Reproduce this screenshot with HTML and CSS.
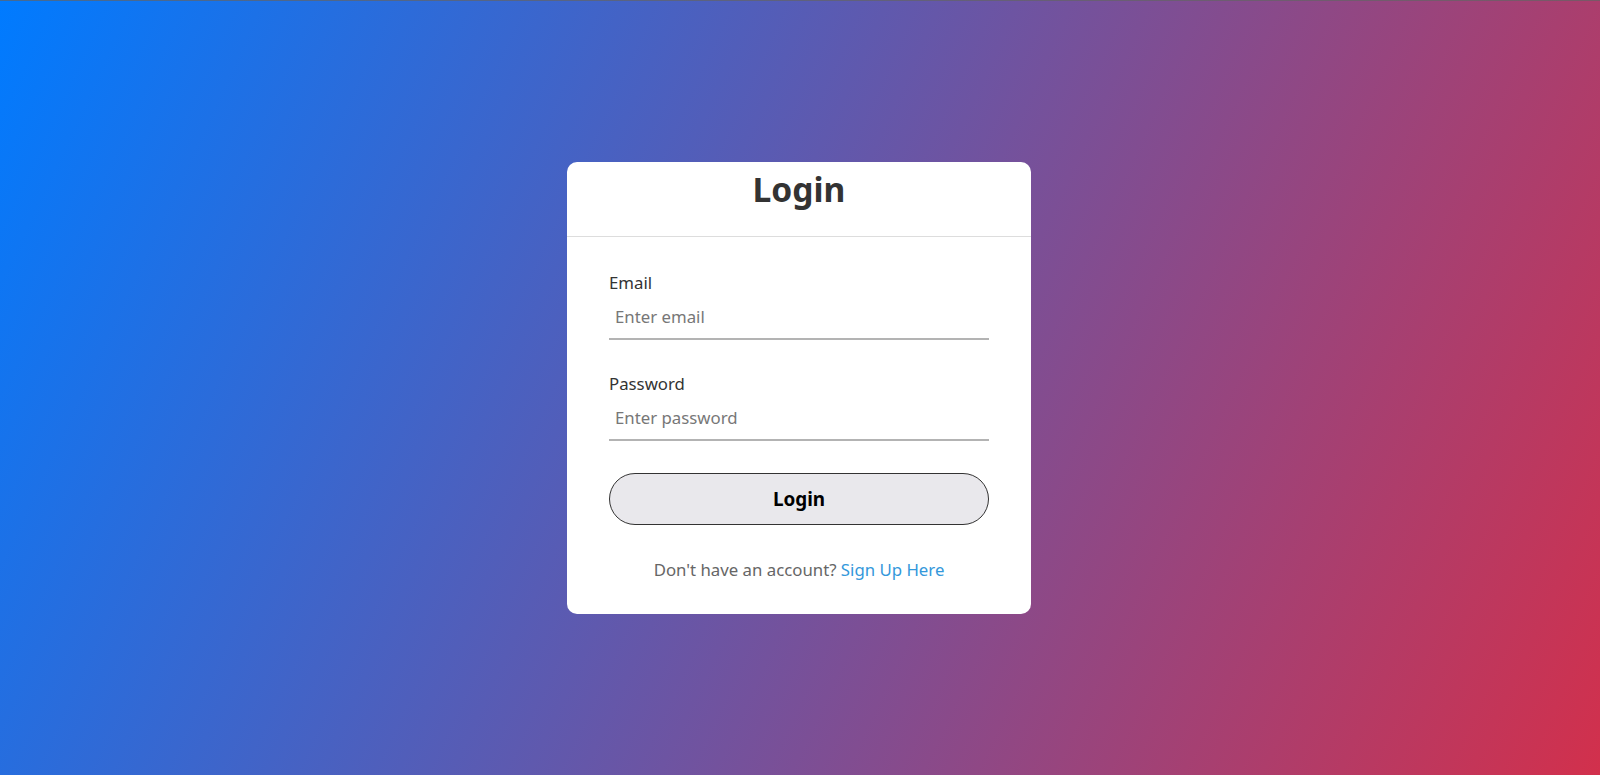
FILE: index.html
```html
<!DOCTYPE html>
<html lang="en">
<head>
<meta charset="utf-8">
<title>Login</title>
<link rel="stylesheet" href="styles.css">
</head>
<body>
<main class="page">
  <section class="card">
    <header class="card-header">
      <h1 class="title">Login</h1>
    </header>
    <form class="card-body">
      <div class="field">
        <label class="label" for="email">Email</label>
        <input class="input" id="email" type="email" placeholder="Enter email">
      </div>
      <div class="field">
        <label class="label" for="password">Password</label>
        <input class="input" id="password" type="password" placeholder="Enter password">
      </div>
      <button class="btn" type="button">Login</button>
      <p class="footer-text">Don't have an account? <a class="link" href="#">Sign Up Here</a></p>
    </form>
  </section>
</main>
</body>
</html>
```

FILE: styles.css
```css
* { box-sizing: border-box; }
html, body { margin: 0; padding: 0; }
body {
  font-family: "Noto Sans", "Open Sans", sans-serif;
  background: linear-gradient(115deg, #007bff, #d2304c);
  border-top: 1px solid rgba(100, 100, 100, 0.7);
  min-height: 100vh;
}
.page {
  height: 774px;
  display: flex;
  align-items: center;
  justify-content: center;
  padding-right: 2px;
}
.card {
  width: 464px;
  background: #fff;
  border-radius: 10px;
}
.card-header {
  height: 75px;
  border-bottom: 1px solid #ddd;
  text-align: center;
  padding-top: 4px;
}
.title {
  margin: 0;
  font-size: 33.6px;
  font-weight: 700;
  color: #333;
  line-height: normal;
}
.card-body {
  padding: 34px 42px 33px;
  display: flex;
  flex-direction: column;
}
.field {
  display: flex;
  flex-direction: column;
  margin-bottom: 32px;
}
.label {
  font-size: 16.8px;
  color: #333;
  margin-bottom: 3px;
  line-height: normal;
}
.input {
  font-family: inherit;
  font-size: 16.8px;
  line-height: normal;
  border: none;
  border-bottom: 2px solid #b3b3b3;
  padding: 8px 6px 10px;
  outline: none;
  color: #333;
  background: transparent;
}
.input::placeholder { color: #777; }
.btn {
  font-family: inherit;
  font-size: 18.9px;
  font-weight: 700;
  color: #000;
  background: #e9e8ec;
  border: 1px solid #333;
  border-radius: 26px;
  padding: 12px 0;
  line-height: normal;
  cursor: pointer;
}
.footer-text {
  margin: 33px 0 0;
  text-align: center;
  font-size: 16.8px;
  color: #666;
  line-height: normal;
}
.link {
  color: #3498db;
  text-decoration: none;
}
```
